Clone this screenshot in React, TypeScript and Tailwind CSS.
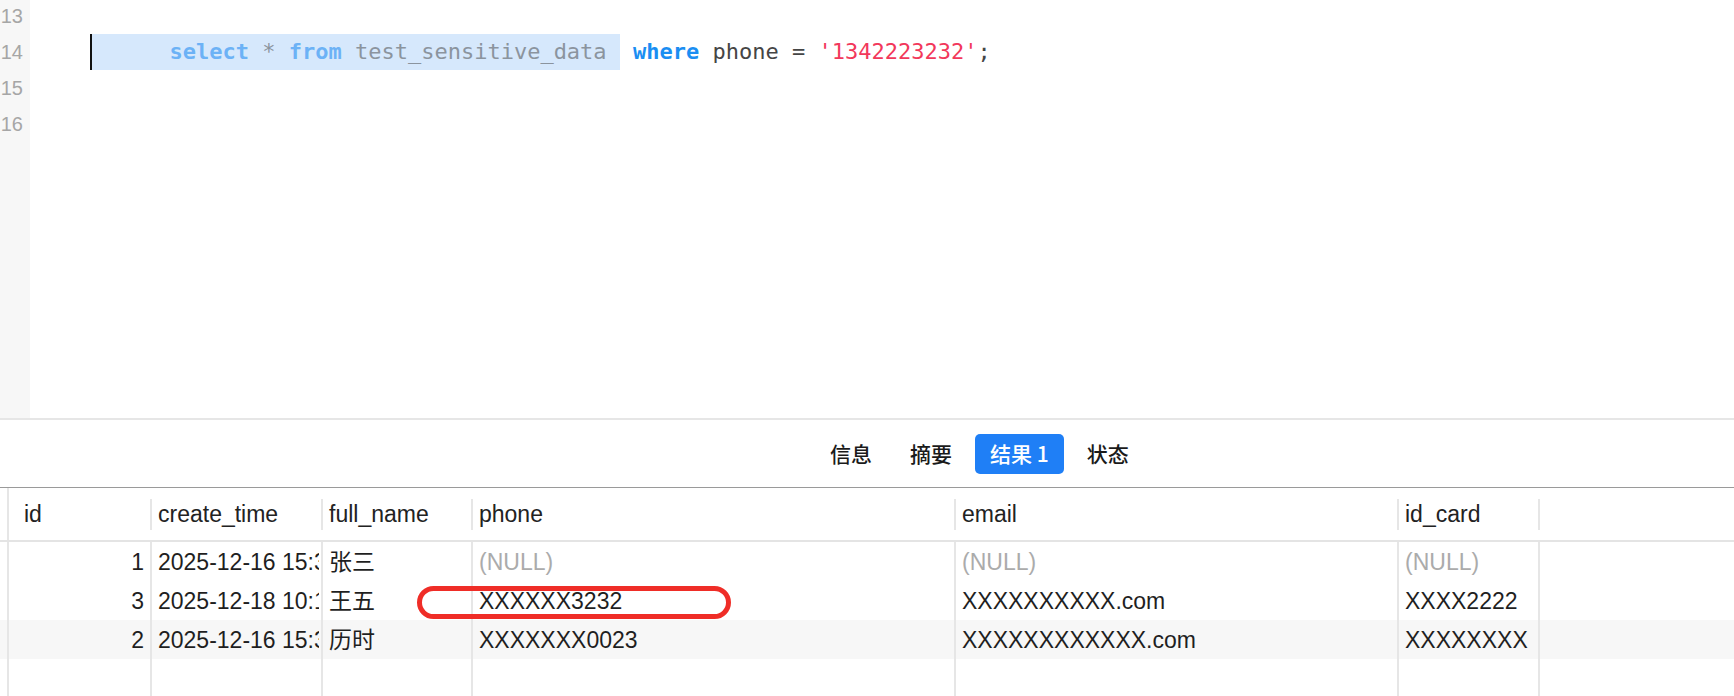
import React from "react";

const sans = { fontFamily: '"Liberation Sans", "Noto Sans CJK SC", sans-serif' };
const cjk = { fontFamily: '"Noto Sans CJK SC", "Liberation Sans", sans-serif' };
const mono = { fontFamily: '"DejaVu Sans Mono", "Liberation Mono", monospace' };

type Col = { key: string; w: string; align?: "right" };
const cols: Col[] = [
  { key: "id", w: "w-[143px]", align: "right" },
  { key: "create_time", w: "w-[171px]" },
  { key: "full_name", w: "w-[150px]" },
  { key: "phone", w: "w-[483px]" },
  { key: "email", w: "w-[443px]" },
  { key: "id_card", w: "w-[141px]" },
];

const rows: (string | null)[][] = [
  ["1", "2025-12-16 15:30:00", "张三", null, null, null],
  ["3", "2025-12-18 10:12:00", "王五", "XXXXXX3232", "XXXXXXXXXX.com", "XXXX2222"],
  ["2", "2025-12-16 15:32:00", "历时", "XXXXXXX0023", "XXXXXXXXXXXX.com", "XXXXXXXX"],
];

function Row({ cells, shade, fill }: { cells: (string | null)[]; shade?: boolean; fill?: boolean }) {
  return (
    <div className={`flex ${fill ? "flex-1" : "h-[39px]"} ${shade ? "bg-[#f7f7f7]" : ""}`}>
      <div className="w-[7px] shrink-0" />
      {cols.map((c, i) => {
        const v = cells[i];
        return (
          <div
            key={c.key}
            className={`${c.w} shrink-0 border-l-2 border-[#e6e6e6] flex items-center pt-[1px] ${
              c.align === "right" ? "justify-end pr-[6px]" : "pl-[6px] pr-[2px]"
            }`}
          >
            {fill ? null : (
              <span
                className={`block overflow-hidden whitespace-nowrap ${
                  v === null ? "text-[#ababab]" : "text-[#1f1f1f]"
                }`}
              >
                {v === null ? "(NULL)" : v}
              </span>
            )}
          </div>
        );
      })}
      <div className="flex-1 border-l-2 border-[#e6e6e6]" />
    </div>
  );
}

export default function App() {
  return (
    <div className="w-[1734px] h-[696px] bg-white overflow-hidden relative flex flex-col">
      {/* Editor */}
      <div className="h-[418px] flex shrink-0 overflow-hidden">
        <div className="w-[30px] bg-[#f7f7f7] shrink-0 flex flex-col items-end pr-[7px] -mt-[2px] pb-[2px]" style={sans}>
          {["13", "14", "15", "16"].map((n) => (
            <div key={n} className="h-[36px] leading-[36px] text-[20px] text-[#a6a6a6]">
              {n}
            </div>
          ))}
        </div>
        <div className="flex-1 pl-[60px] -mt-[2px] text-[22px]" style={mono}>
          <div className="h-[36px]" />
          <div className="h-[36px] leading-[36px] flex whitespace-pre">
            <span className="bg-[#d6e8fc] shadow-[inset_2px_0_0_#111]">
              {"      "}
              <span className="font-bold text-[#6cb2f6]">select</span>
              <span className="text-[#8b949e]"> * </span>
              <span className="font-bold text-[#6cb2f6]">from</span>
              <span className="text-[#8b949e]"> test_sensitive_data </span>
            </span>
            <span> </span>
            <span className="font-bold text-[#1a8ef2]">where</span>
            <span className="text-[#454545]"> phone = </span>
            <span className="text-[#f2385b]">'1342223232'</span>
            <span className="text-[#454545]">;</span>
          </div>
        </div>
      </div>
      <div className="h-[2px] bg-[#e6e6e6] shrink-0" />

      {/* Tabs */}
      <div className="h-[68px] shrink-0 flex items-center pl-[815px] gap-[8px] border-b border-[#9a9a9a]" style={cjk}>
        {["信息", "摘要", "结果 1", "状态"].map((t) => (
          <div
            key={t}
            className={`h-[40px] px-[15px] flex items-center rounded-[5px] text-[21px] font-medium ${
              t === "结果 1" ? "bg-[#1f7ff6] text-white" : "text-[#1a1a1a]"
            }`}
          >
            {t}
          </div>
        ))}
      </div>

      {/* Table */}
      <div className="flex-1 flex flex-col text-[23px]" style={sans}>
        <div className="h-[54px] shrink-0 flex border-b-2 border-[#e4e4e4]">
          <div className="w-[7px] shrink-0" />
          {cols.map((c, i) => (
            <div key={c.key} className={`${c.w} shrink-0 flex items-center ${i === 0 ? "border-l-2 border-[#e6e6e6]" : ""}`}>
              {i > 0 && <div className="w-[2px] h-[31px] bg-[#e6e6e6] shrink-0" />}
              <span className={`text-[#222] ${i === 0 ? "pl-[15px]" : "pl-[6px]"}`}>{c.key}</span>
            </div>
          ))}
          <div className="flex-1 flex items-center">
            <div className="w-[2px] h-[31px] bg-[#e6e6e6]" />
          </div>
        </div>
        {rows.map((r, i) => (
          <Row key={i} cells={r} shade={i === 2} />
        ))}
        <Row cells={[]} fill />
      </div>

      {/* annotation */}
      <div className="absolute left-[417px] top-[586px] w-[314px] h-[33px] rounded-full border-[5px] border-[#ef2d27]" />
    </div>
  );
}
